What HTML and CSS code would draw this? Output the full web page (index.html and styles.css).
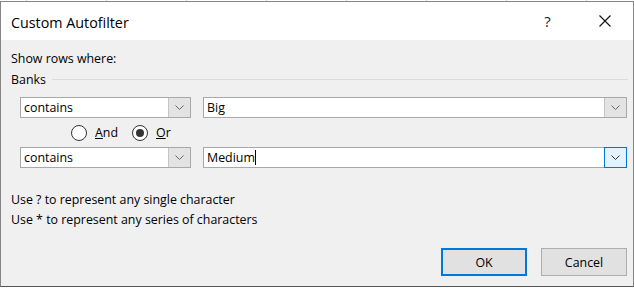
FILE: index.html
```html
<!DOCTYPE html>
<html lang="en">
<head>
    <meta charset="UTF-8">
    <title>Custom Autofilter</title>
    <link rel="stylesheet" href="styles.css">
</head>
<body>
    <div class="sheet"></div>

    <div class="dialog">
        <div class="titlebar">
            <span class="title">Custom Autofilter</span>
            <span class="title-btn help">?</span>
            <span class="title-btn close">
                <svg width="12" height="12" viewBox="0 0 12 12">
                    <path d="M0.5 0.5 L11.5 11.5 M11.5 0.5 L0.5 11.5" stroke="#111" stroke-width="1.1" fill="none"/>
                </svg>
            </span>
        </div>

        <div class="content">
            <div class="label">Show rows where:</div>
            <div class="group">
                <span class="label">Banks</span>
                <span class="rule"></span>
            </div>

            <div class="filter-row">
                <div class="combo op">
                    <span class="value">contains</span>
                    <span class="drop"><svg width="9" height="5" viewBox="0 0 9 5"><path d="M0.5 0.5 L4.5 4.5 L8.5 0.5" stroke="#666" fill="none"/></svg></span>
                </div>
                <div class="combo val">
                    <span class="value">Big</span>
                    <span class="drop"><svg width="9" height="5" viewBox="0 0 9 5"><path d="M0.5 0.5 L4.5 4.5 L8.5 0.5" stroke="#666" fill="none"/></svg></span>
                </div>
            </div>

            <div class="radio-row">
                <span class="radio"></span>
                <span class="radio-label"><u>A</u>nd</span>
                <span class="radio checked"></span>
                <span class="radio-label"><u>O</u>r</span>
            </div>

            <div class="filter-row">
                <div class="combo op">
                    <span class="value">contains</span>
                    <span class="drop"><svg width="9" height="5" viewBox="0 0 9 5"><path d="M0.5 0.5 L4.5 4.5 L8.5 0.5" stroke="#666" fill="none"/></svg></span>
                </div>
                <div class="combo val">
                    <span class="value">Medium<span class="caret"></span></span>
                    <span class="drop focus"><svg width="9" height="5" viewBox="0 0 9 5"><path d="M0.5 0.5 L4.5 4.5 L8.5 0.5" stroke="#333" fill="none"/></svg></span>
                </div>
            </div>

            <div class="hints">
                <div>Use ? to represent any single character</div>
                <div>Use * to represent any series of characters</div>
            </div>

            <div class="buttons">
                <button class="btn default">OK</button>
                <button class="btn">Cancel</button>
            </div>
        </div>
    </div>
</body>
</html>
```

FILE: styles.css
```css
body {
    margin: 0;
    padding: 0;
    width: 634px;
    height: 288px;
    overflow: hidden;
    background-color: #fff;
    font-family: "Open Sans", "Noto Sans", sans-serif;
    font-size: 12.4px;
    color: #000;
}
.sheet {
    height: 1px;
    background: repeating-linear-gradient(to right, #fff 0 26px, #d0d0d0 26px 27px, #fff 27px 80px);
}
.dialog {
    box-sizing: border-box;
    width: 634px;
    height: 286px;
    border: 1px solid #858585;
    border-bottom-color: #555;
    display: flex;
    flex-direction: column;
}
.titlebar {
    height: 38px;
    flex: none;
    display: flex;
    align-items: center;
    background-color: #fff;
    padding-left: 10px;
}
.title {
    flex: 1;
    font-size: 14.3px;
    position: relative;
    top: 1px;
}
.title-btn {
    width: 57px;
    height: 38px;
    display: flex;
    align-items: center;
    justify-content: center;
}
.help {
    font-size: 15px;
    color: #222;
}
.content {
    flex: 1;
    background-color: #f0f0f0;
    padding: 10px 5px 0 10px;
    display: flex;
    flex-direction: column;
}
.label {
    line-height: 18px;
}
.group {
    display: flex;
    align-items: center;
    margin-top: 3px;
}
.rule {
    flex: 1;
    height: 1px;
    background-color: #dcdcdc;
    margin-left: 6px;
    position: relative;
    top: -1px;
}
.filter-row {
    display: flex;
    gap: 12px;
    margin-left: 9px;
}
.group + .filter-row {
    margin-top: 8px;
}
.combo {
    box-sizing: border-box;
    height: 21px;
    border: 1px solid #a8a8a8;
    background-color: #fff;
    display: flex;
    align-items: stretch;
}
.combo.op {
    width: 171px;
}
.combo.val {
    width: 424px;
}
.value {
    flex: 1;
    padding-left: 3px;
    line-height: 19px;
}
.drop {
    width: 21px;
    display: flex;
    align-items: center;
    justify-content: center;
    background-color: #e3e3e3;
    border-left: 1px solid #c4c4c4;
}
.drop.focus {
    background-color: #e5f1fb;
    border: 1px solid #0078d7;
    margin: -1px -1px -1px 0;
}
.caret {
    display: inline-block;
    width: 1px;
    height: 15px;
    background-color: #000;
    vertical-align: -3px;
}
.radio-row {
    height: 29px;
    display: flex;
    align-items: center;
    padding-left: 60px;
}
.radio {
    box-sizing: border-box;
    width: 16px;
    height: 16px;
    border: 1px solid #333;
    border-radius: 50%;
    background-color: #fff;
    position: relative;
}
.radio.checked::after {
    content: "";
    position: absolute;
    left: 3px;
    top: 3px;
    width: 8px;
    height: 8px;
    border-radius: 50%;
    background-color: #333;
}
.radio-label {
    margin-left: 8px;
    margin-right: 14px;
}
.hints {
    margin-top: 22px;
    line-height: 20px;
}
.buttons {
    display: flex;
    justify-content: flex-end;
    gap: 14px;
    margin-top: 18px;
    padding-right: 1px;
}
.btn {
    box-sizing: border-box;
    width: 86px;
    height: 28px;
    border: 1px solid #adadad;
    background-color: #e1e1e1;
    font-family: inherit;
    font-size: 12.4px;
    color: #000;
    padding: 0;
}
.btn.default {
    border: 2px solid #0078d7;
}
```
